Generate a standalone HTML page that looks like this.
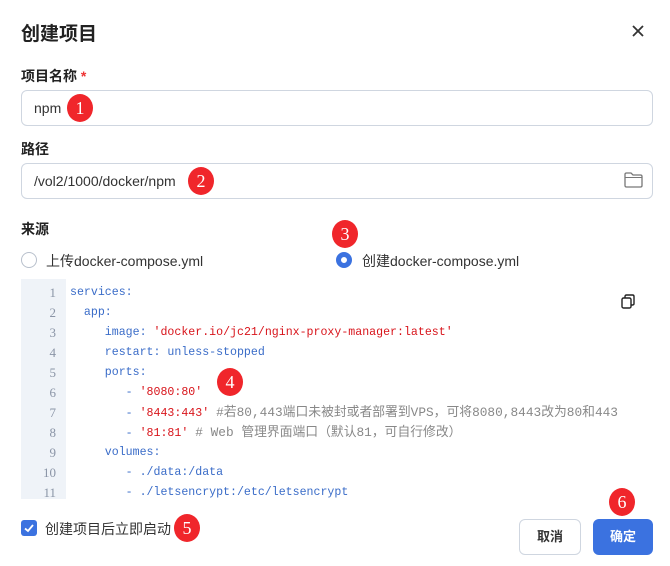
<!DOCTYPE html>
<html><head><meta charset="utf-8"><style>
*{box-sizing:border-box;margin:0;padding:0}
body{width:670px;height:566px;background:#fff;font-family:"Liberation Sans","Noto Sans CJK SC",sans-serif;color:#222;position:relative;overflow:hidden}
.a{position:absolute}
.title{left:21px;top:19px;font-size:19px;font-weight:bold;color:#222}
.lbl{left:21px;font-size:14px;font-weight:bold;color:#222}
.inp{left:21px;width:632px;height:36px;border:1px solid #cfd6e0;border-radius:6px;font-size:14px;padding-left:12px;line-height:34px;color:#333}
.badge{width:26px;height:28px;border-radius:50%;background:#f0262b;color:#fff;font-family:"Liberation Serif",serif;font-size:18px;text-align:center;line-height:28px}
.code{left:21px;top:279px;width:634px;height:220px;font-family:"Liberation Mono",monospace;font-size:11.6px}
.gut{left:0;top:0;width:45px;height:220px;background:#eff3f8}
.ln{position:absolute;width:35px;text-align:right;color:#8a94a6;font-family:"Liberation Serif",serif;font-size:13px}
.cl{position:absolute;left:49px;white-space:pre;color:#3a6cc8;line-height:15px}
.r{color:#d8141b}.g{color:#888;font-family:"Liberation Mono","Noto Sans CJK SC",monospace;font-size:12.8px;line-height:15px}
.btn{height:36px;border-radius:6px;font-size:13px;font-weight:bold;text-align:center;line-height:34px}
</style></head><body>
<div class="a title">创建项目</div>
<svg class="a" style="left:632px;top:25px" width="12" height="12" viewBox="0 0 12 12"><path d="M1 1L11 11M11 1L1 11" stroke="#333" stroke-width="1.8"/></svg>
<div class="a lbl" style="top:66px">项目名称 <span style="color:#e33">*</span></div>
<div class="a inp" style="top:90px">npm</div>
<div class="a lbl" style="top:139px">路径</div>
<div class="a inp" style="top:163px">/vol2/1000/docker/npm</div>
<svg class="a" style="left:624px;top:172px" width="19" height="16" viewBox="0 0 19 16"><path d="M1 2.5Q1 1 2.5 1H7L9 3H16.5Q18 3 18 4.5V13.5Q18 15 16.5 15H2.5Q1 15 1 13.5Z" fill="none" stroke="#777" stroke-width="1.3"/><path d="M1 5.5H18" stroke="#777" stroke-width="1.1"/></svg>
<div class="a lbl" style="top:219px">来源</div>
<div class="a" style="left:21px;top:252px;width:16px;height:16px;border:1px solid #b8c0cc;border-radius:50%"></div>
<div class="a" style="left:46px;top:251px;font-size:14px;color:#333">上传docker-compose.yml</div>
<div class="a" style="left:336px;top:252px;width:16px;height:16px;border:5px solid #3b72e0;border-radius:50%;background:#fff"></div>
<div class="a" style="left:362px;top:251px;font-size:14px;color:#333">创建docker-compose.yml</div>
<div class="a code">
<div class="a gut"></div>
<div class="ln" style="top:6px">1</div><div class="ln" style="top:26px">2</div><div class="ln" style="top:46px">3</div><div class="ln" style="top:66px">4</div><div class="ln" style="top:86px">5</div><div class="ln" style="top:106px">6</div><div class="ln" style="top:126px">7</div><div class="ln" style="top:146px">8</div><div class="ln" style="top:166px">9</div><div class="ln" style="top:186px">10</div><div class="ln" style="top:206px">11</div>
<div class="cl" style="top:6px">services:</div>
<div class="cl" style="top:26px">  app:</div>
<div class="cl" style="top:46px">     image: <span class="r">'docker.io/jc21/nginx-proxy-manager:latest'</span></div>
<div class="cl" style="top:66px">     restart: unless-stopped</div>
<div class="cl" style="top:86px">     ports:</div>
<div class="cl" style="top:106px">        - <span class="r">'8080:80'</span></div>
<div class="cl" style="top:126px">        - <span class="r">'8443:443'</span> <span class="g">#若80,443端口未被封或者部署到VPS，可将8080,8443改为80和443</span></div>
<div class="cl" style="top:146px">        - <span class="r">'81:81'</span> <span class="g"># Web 管理界面端口（默认81，可自行修改）</span></div>
<div class="cl" style="top:166px">     volumes:</div>
<div class="cl" style="top:186px">        - ./data:/data</div>
<div class="cl" style="top:206px">        - ./letsencrypt:/etc/letsencrypt</div>
</div>
<svg class="a" style="left:621px;top:294px" width="14" height="15" viewBox="0 0 14 15"><rect x="1" y="4" width="9" height="10" rx="1.5" fill="none" stroke="#222" stroke-width="1.4"/><path d="M4 4V2.5Q4 1 5.5 1H11.5Q13 1 13 2.5V9.5Q13 11 11.5 11H10" fill="none" stroke="#222" stroke-width="1.4"/></svg>
<div class="a" style="left:21px;top:520px;width:16px;height:16px;background:#3b72e0;border-radius:3px"></div>
<svg class="a" style="left:21px;top:520px" width="16" height="16"><path d="M4 8.5L7 11L12 5" fill="none" stroke="#fff" stroke-width="1.8"/></svg>
<div class="a" style="left:45px;top:519px;font-size:14px;color:#333">创建项目后立即启动</div>
<div class="a btn" style="left:519px;top:519px;width:62px;border:1px solid #cfd6e0;color:#333">取消</div>
<div class="a btn" style="left:593px;top:519px;width:60px;background:#3b72e0;color:#fff;line-height:36px">确定</div>
<div class="a badge" style="left:67px;top:94px">1</div>
<div class="a badge" style="left:188px;top:167px">2</div>
<div class="a badge" style="left:332px;top:220px">3</div>
<div class="a badge" style="left:217px;top:368px">4</div>
<div class="a badge" style="left:174px;top:514px">5</div>
<div class="a badge" style="left:609px;top:488px">6</div>
</body></html>
